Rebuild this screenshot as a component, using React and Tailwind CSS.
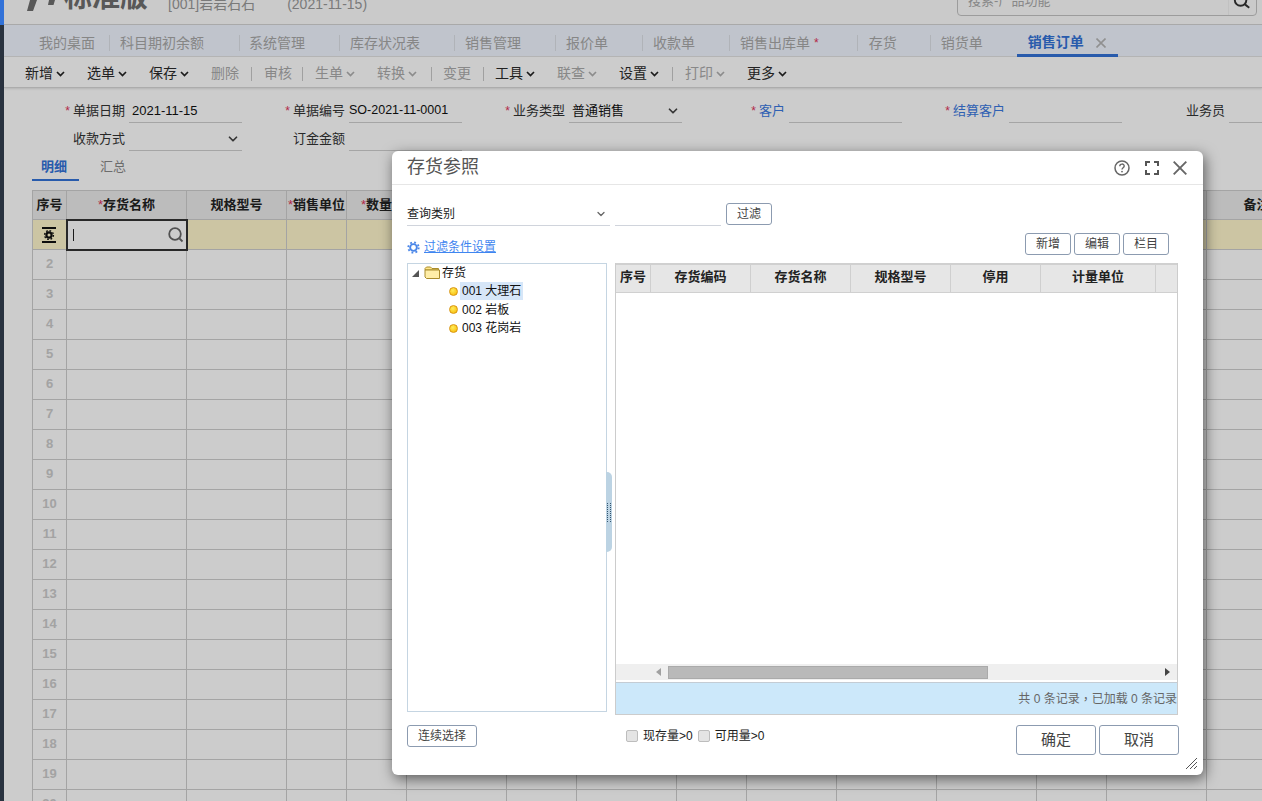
import { ChevronDown } from 'lucide-react';

const font = { fontFamily: '"Liberation Sans","Noto Sans CJK SC",sans-serif' };

const tabs = [
  { name: '我的桌面', cls: 'pl-[11px] pr-[14px]' },
  { name: '科目期初余额', cls: 'pl-[10px] pr-[35px]' },
  { name: '系统管理', cls: 'pl-[9px] pr-[34px]' },
  { name: '库存状况表', cls: 'pl-[10px] pr-[34px]' },
  { name: '销售管理', cls: 'pl-[10px] pr-[34px]' },
  { name: '报价单', cls: 'pl-[10px] pr-[34px]' },
  { name: '收款单', cls: 'pl-[10px] pr-[34px]' },
  { name: '销售出库单', cls: 'pl-[10px] pr-[50px]', star: true },
  { name: '存货', cls: 'pl-[11px] pr-[33px]' },
  { name: '销货单', cls: 'pl-[10px] pr-[34px]' },
];

const gridCols = [34, 120, 100, 60, 60, 100, 70, 100, 70, 90, 100, 100, 70, 100, 100];
const rowNums = Array.from({ length: 19 }, (_, i) => i + 2);

function Chevron({ dim }) {
  return (
    <svg width="9" height="6" viewBox="0 0 9 6" className={dim ? 'ml-[3px] text-[#b0b0b0]' : 'ml-[3px] text-[#222]'}>
      <path d="M1 1l3.5 3.5L8 1" fill="none" stroke="currentColor" strokeWidth="1.7" />
    </svg>
  );
}

function ToolItem({ label, dim, chevron, cls }) {
  return (
    <div className={`flex items-center ${cls} ${dim ? 'text-[#aaaaaa]' : 'text-[#2b2b2b]'}`}>
      <span>{label}</span>
      {chevron && <Chevron dim={dim} />}
    </div>
  );
}

function ToolSep({ cls }) {
  return <div className={`w-px h-[14px] bg-[#c9c9c9] ${cls}`}></div>;
}

function Field({ label, star, blue, value, select, small }) {
  return (
    <div className="flex w-[220px] h-7 shrink-0">
      <div className="w-[103px] pt-1 flex items-center justify-end text-[13px] text-[#333]">
        {star && <span className="text-[#e0325a] mr-[3px] text-[12px]">*</span>}
        <span className={blue ? 'text-[#3a78e0]' : ''}>{label}</span>
      </div>
      <div className={`ml-1 w-[113px] pt-1 border-b border-[#cfcfcf] flex items-center justify-between pr-[2px] text-[#111] ${small ? 'text-[12.5px]' : 'pl-[3px] text-[13px]'}`}>
        <span>{value}</span>
        {select && <ChevronDown size={14} strokeWidth={3} className="text-[#444]" />}
      </div>
    </div>
  );
}

function Btn({ children, cls }) {
  return (
    <button className={`border border-[#8c9bb0] rounded-[3px] bg-white text-[#444] flex items-center justify-center ${cls}`}>
      {children}
    </button>
  );
}

function Folder() {
  return (
    <svg width="17" height="14" viewBox="0 0 17 14">
      <path d="M1 3.5V2.5L2.5 1H6.5L8 2.5H14.5V4H1z" fill="#ffe68a" stroke="#a98c2c" />
      <path d="M1 4H15.5V12.5H2.5L1 11z" fill="#ffeea8" stroke="#a98c2c" />
    </svg>
  );
}

function Ball() {
  return <span className="w-[9px] h-[9px] rounded-full bg-[radial-gradient(circle_at_40%_35%,#ffec5a,#f7b500)] border border-[#d9960f] shrink-0"></span>;
}

function TreeNode({ label, active }) {
  return (
    <div className="flex items-center h-[18.5px] pl-[41px]">
      <Ball />
      <span className={`ml-[2px] px-[2px] h-[18px] leading-[18px] ${active ? 'bg-[#d6e6f8]' : ''}`}>{label}</span>
    </div>
  );
}

export default function App() {
  return (
    <div style={font} className="relative w-[1262px] h-[801px] overflow-hidden bg-white flex">
      {/* left strip */}
      <div className="w-1 shrink-0 flex flex-col bg-[#29323f]">
        <div className="h-[25px] bg-[#3272d8]"></div>
      </div>

      <div className="flex-1 min-w-0 flex flex-col">
        {/* Header, scrolled up */}
        <div className="h-[25px] shrink-0 overflow-hidden border-b border-[#d4d4d4] flex items-start bg-[#fdfdfd]">
          <svg width="30" height="14" viewBox="0 0 30 14" className="ml-[22px] shrink-0">
            <path d="M4 0H11L7 11H1z" fill="#6e6e6e" />
            <path d="M23 0H29L27.5 5H22z" fill="#6e6e6e" />
          </svg>
          <div className="ml-2 -mt-[19px] text-[28px] leading-[34px] font-bold text-[#6e6e6e]">标准版</div>
          <div className="ml-5 -mt-[6px] text-[14px] leading-5 text-[#999]">[001]岩岩石石</div>
          <div className="ml-8 -mt-[6px] text-[14px] leading-5 text-[#999]">(2021-11-15)</div>
          <div className="ml-[590px] -mt-[14px] w-[300px] h-[30px] shrink-0 border border-[#c4c4c4] rounded-[4px] flex items-center justify-between pl-[10px] text-[13px] text-[#aaa]">
            <span>搜索-产品功能</span>
            <svg width="28" height="28" viewBox="0 0 28 28" className="border-l border-[#f2f2f2]">
              <circle cx="12" cy="13" r="6" fill="none" stroke="#333" strokeWidth="2" />
              <path d="M16.5 17.5L21 21" stroke="#333" strokeWidth="2" />
            </svg>
          </div>
        </div>

        {/* Tabs */}
        <div className="h-8 shrink-0 bg-[#f0f5ff] border-b border-[#e4e4e4] flex items-center pl-6 text-[14px] text-[#a8a8a8]">
          {tabs.map((t, i) => (
            <div key={t.name} className={`flex items-center h-[16px] mt-[5px] ${t.cls} ${i > 0 ? 'border-l border-[#dde0e6]' : ''}`}>
              <span>{t.name}</span>
              {t.star && <span className="ml-[4px] -mr-[12px] text-[#e0325a] text-[12px]">*</span>}
            </div>
          ))}
          <div className="flex items-center h-8 w-[101px] pl-[11px] pt-[7px] border-b-[3px] border-[#3272d8] text-[#3272d8] font-bold">
            <span>销售订单</span>
            <svg width="10" height="10" viewBox="0 0 10 10" className="ml-3">
              <path d="M0.5 0.5L9.5 9.5M9.5 0.5L0.5 9.5" stroke="#b5b5b5" strokeWidth="1.6" />
            </svg>
          </div>
        </div>

        {/* Toolbar */}
        <div className="h-[31px] shrink-0 pt-[3px] border-b border-[#d8d8d8] shadow-[0_1px_2px_rgba(0,0,0,0.12)] flex items-center pl-[21px] text-[14px]">
          <ToolItem label="新增" chevron cls="mr-[22px]" />
          <ToolItem label="选单" chevron cls="mr-[22px]" />
          <ToolItem label="保存" chevron cls="mr-[22px]" />
          <ToolItem label="删除" dim cls="mr-3" />
          <ToolSep cls="mr-3" />
          <ToolItem label="审核" dim cls="mr-[10px]" />
          <ToolSep cls="mr-3" />
          <ToolItem label="生单" dim chevron cls="mr-[22px]" />
          <ToolItem label="转换" dim chevron cls="mr-[14px]" />
          <ToolSep cls="mr-[11px]" />
          <ToolItem label="变更" dim cls="mr-3" />
          <ToolSep cls="mr-[11px]" />
          <ToolItem label="工具" chevron cls="mr-[22px]" />
          <ToolItem label="联查" dim chevron cls="mr-[22px]" />
          <ToolItem label="设置" chevron cls="mr-[13px]" />
          <ToolSep cls="mr-3" />
          <ToolItem label="打印" dim chevron cls="mr-[22px]" />
          <ToolItem label="更多" chevron />
        </div>

        {/* Form */}
        <div className="pl-[18px] pt-[7px] shrink-0">
          <div className="flex">
            <Field label="单据日期" star value="2021-11-15" />
            <Field label="单据编号" star value="SO-2021-11-0001" small />
            <Field label="业务类型" star value="普通销售" select />
            <Field label="客户" star blue />
            <Field label="结算客户" star blue />
            <Field label="业务员" />
          </div>
          <div className="flex">
            <Field label="收款方式" select />
            <Field label="订金金额" />
          </div>
        </div>

        {/* Detail tabs */}
        <div className="flex h-[30px] pl-7 shrink-0 text-[13px]">
          <div className="w-[47px] h-[30px] pr-[3px] text-center leading-[32px] border-b-[2px] border-[#3272d8] text-[#3272d8] font-bold">明细</div>
          <div className="ml-[21px] leading-[32px] text-[#888]">汇总</div>
        </div>

        {/* Grid */}
        <div className="pl-7 pt-[9px]">
          <table className="table-fixed border-collapse w-[1274px] text-[13px]">
            <colgroup>
              {gridCols.map((w, i) => <col key={i} style={{ width: w }} />)}
            </colgroup>
            <thead>
              <tr className="h-[29px] bg-[#ebebeb] font-bold text-[#222]">
                <th className="border border-[#cecece]">序号</th>
                <th className="border border-[#cecece]"><span className="text-[#e0325a] font-normal">*</span>存货名称</th>
                <th className="border border-[#cecece]">规格型号</th>
                <th className="border border-[#cecece] whitespace-nowrap"><span className="text-[#e0325a] font-normal">*</span>销售单位</th>
                <th className="border border-[#cecece] whitespace-nowrap"><span className="text-[#e0325a] font-normal">*</span>数量</th>
                {gridCols.slice(5, 14).map((_, i) => <th key={i} className="border border-[#cecece]"></th>)}
                <th className="border border-[#cecece]">备注</th>
              </tr>
            </thead>
            <tbody>
              <tr className="h-[30px] bg-[#fff7cc]">
                <td className="border border-[#cecece]">
                  <svg width="14" height="16" viewBox="0 0 14 16" className="mx-auto">
                    <path d="M0 1H14M0 15H14" stroke="#111" strokeWidth="2" />
                    <circle cx="7" cy="8" r="2.6" fill="none" stroke="#111" strokeWidth="2.2" />
                    <circle cx="7" cy="8" r="4.4" fill="none" stroke="#111" strokeWidth="1.4" strokeDasharray="1.7 1.75" />
                  </svg>
                </td>
                <td className="border-2 border-[#333] bg-white">
                  <div className="flex items-center justify-between pl-[5px] pr-[1px] h-[26px]">
                    <span className="w-px h-[12px] bg-[#222]"></span>
                    <svg width="18" height="18" viewBox="0 0 18 18">
                      <circle cx="8" cy="8" r="5.8" fill="none" stroke="#666" strokeWidth="1.8" />
                      <path d="M12.5 12.5L15.5 15.5" stroke="#666" strokeWidth="1.8" />
                    </svg>
                  </div>
                </td>
                {gridCols.slice(2).map((_, i) => <td key={i} className="border border-[#cecece]"></td>)}
              </tr>
              {rowNums.map((n) => (
                <tr key={n} className="h-[30px]">
                  <td className="border border-[#cecece] pb-[2px] text-center text-[#ccc] font-bold">{n}</td>
                  {gridCols.slice(1).map((_, i) => <td key={i} className="border border-[#cecece]"></td>)}
                </tr>
              ))}
            </tbody>
          </table>
        </div>
      </div>

      {/* Mask */}
      <div className="absolute inset-y-0 right-0 left-1 bg-black/20"></div>

      {/* Dialog */}
      <div className="absolute left-[392px] top-[151px] w-[811px] h-[624px] bg-white rounded-[6px] shadow-[2px_4px_14px_rgba(0,0,0,0.55)] flex flex-col text-[12px] text-[#222]">
        <div className="h-[34px] shrink-0 border-b border-[#e6e6e6] flex items-center justify-between pl-[15px] pr-4">
          <span className="text-[18px] text-[#555]">存货参照</span>
          <div className="flex items-center text-[#555]">
            <svg width="16" height="16" viewBox="0 0 16 16">
              <circle cx="8" cy="8" r="7" fill="none" stroke="#666" strokeWidth="1.5" />
              <path d="M5.8 6.2C5.8 3.4 10.2 3.4 10.2 6c0 1.8-2.2 1.7-2.2 3.6" fill="none" stroke="#666" strokeWidth="1.4" />
              <circle cx="8" cy="11.6" r="0.9" fill="#666" />
            </svg>
            <svg width="14" height="14" viewBox="0 0 14 14" className="ml-[15px]">
              <path d="M1 5V1H5M9 1H13V5M13 9V13H9M5 13H1V9" fill="none" stroke="#555" strokeWidth="2" />
            </svg>
            <svg width="14" height="14" viewBox="0 0 14 14" className="ml-[14px]">
              <path d="M0.7 0.7L13.3 13.3M13.3 0.7L0.7 13.3" stroke="#666" strokeWidth="1.9" />
            </svg>
          </div>
        </div>

        <div className="flex-1 flex flex-col pl-[15px] pr-6 min-h-0">
          {/* Filter */}
          <div className="flex mt-[18px] h-[23px] shrink-0">
            <div className="w-[203px] border-b border-[#d0d4dc] flex items-center justify-between pr-[3px]">
              <span>查询类别</span>
              <ChevronDown size={12} strokeWidth={2.6} className="text-[#666]" />
            </div>
            <div className="ml-[5px] w-[106px] border-b border-[#d0d4dc]"></div>
            <Btn cls="ml-[5px] w-[46px] h-[22px]">过滤</Btn>
          </div>

          {/* Links and actions */}
          <div className="flex items-center justify-between h-[22px] mt-[7px] shrink-0 pr-[10px]">
            <div className="flex items-center pt-[6px]">
              <svg width="13" height="13" viewBox="0 0 14 14" className="mr-[4px]">
                <circle cx="7" cy="7" r="3.6" fill="none" stroke="#4a86e8" strokeWidth="2" />
                <circle cx="7" cy="7" r="5.6" fill="none" stroke="#4a86e8" strokeWidth="2" strokeDasharray="2 2.4" />
              </svg>
              <span className="text-[#3f86f0] underline">过滤条件设置</span>
            </div>
            <div className="flex gap-[3px]">
              <Btn cls="w-[46px] h-[22px]">新增</Btn>
              <Btn cls="w-[46px] h-[22px]">编辑</Btn>
              <Btn cls="w-[46px] h-[22px]">栏目</Btn>
            </div>
          </div>

          {/* Body */}
          <div className="relative flex mt-2 h-[452px] shrink-0">
            <div className="w-[200px] h-[449px] border border-[#c5d5e2] text-[#111]">
              <div className="flex items-center h-[18px] pl-[4px]">
                <svg width="7" height="7" viewBox="0 0 7 7"><path d="M7 0V7H0z" fill="#555" /></svg>
                <span className="ml-[5px]"><Folder /></span>
                <span className="ml-[1px]">存货</span>
              </div>
              <TreeNode label="001 大理石" active />
              <TreeNode label="002 岩板" />
              <TreeNode label="003 花岗岩" />
            </div>

            {/* splitter handle */}
            <div className="absolute left-[199px] top-[209px] w-[6px] h-20 bg-[#bcd3e3] rounded-r-[5px] flex items-center">
              <div className="ml-[1px] grid grid-cols-2 gap-[1px] w-[4px]">
                {Array.from({ length: 20 }, (_, i) => <span key={i} className="w-px h-px bg-[#33556f]"></span>)}
              </div>
            </div>

            <div className="ml-2 w-[563px] border-x border-b border-[#cccccc] flex flex-col">
              <div className="flex h-[30px] shrink-0 bg-[#e6e6e6] border-t-2 border-t-[#d0d0d0] border-b border-b-[#d0d0d0] font-bold text-[13px] text-[#222]">
                <div className="w-[35px] pb-[3px] flex items-center justify-center border-r border-[#cfcfcf]">序号</div>
                <div className="w-[100px] pb-[3px] flex items-center justify-center border-r border-[#cfcfcf]">存货编码</div>
                <div className="w-[100px] pb-[3px] flex items-center justify-center border-r border-[#cfcfcf]">存货名称</div>
                <div className="w-[100px] pb-[3px] flex items-center justify-center border-r border-[#cfcfcf]">规格型号</div>
                <div className="w-[90px] pb-[3px] flex items-center justify-center border-r border-[#cfcfcf]">停用</div>
                <div className="w-[115px] pb-[3px] flex items-center justify-center border-r border-[#cfcfcf]">计量单位</div>
              </div>
              <div className="flex-1"></div>
              {/* scrollbar */}
              <div className="h-[16px] shrink-0 bg-[#efefef] flex items-center">
                <svg width="6" height="8" viewBox="0 0 6 8" className="ml-[40px]"><path d="M5 0V8L0 4z" fill="#a0a0a0" /></svg>
                <div className="ml-[6px] w-[320px] h-[13px] bg-[#b9b9b9] border border-[#aaa]"></div>
                <svg width="6" height="8" viewBox="0 0 6 8" className="ml-[177px]"><path d="M0 0V8L5 4z" fill="#444" /></svg>
              </div>
              <div className="h-[2px] shrink-0"></div>
              <div className="h-[32px] shrink-0 bg-[#cce8fa] border-t border-[#c4ccd4] flex items-center justify-end text-[#666]">
                共 0 条记录<span className="font-['Noto_Sans_CJK_TC']">，</span>已加载 0 条记录
              </div>
            </div>
          </div>

          {/* Bottom */}
          <div className="flex mt-[10px] justify-between items-start shrink-0">
            <div className="flex items-start">
              <Btn cls="w-[70px] h-[22px]">连续选择</Btn>
              <div className="ml-[149px] mt-[2px] flex items-center text-[#222]">
                <span className="w-3 h-3 rounded-[2px] bg-[#e4e4e4] border border-[#bdbdbd]"></span>
                <span className="ml-[5px]">现存量&gt;0</span>
                <span className="ml-[5px] w-3 h-3 rounded-[2px] bg-[#e4e4e4] border border-[#bdbdbd]"></span>
                <span className="ml-[5px]">可用量&gt;0</span>
              </div>
            </div>
            <div className="flex gap-[3px]">
              <Btn cls="w-20 h-[30px] text-[15px]">确定</Btn>
              <Btn cls="w-20 h-[30px] text-[15px]">取消</Btn>
            </div>
          </div>
        </div>

        {/* resize grip */}
        <svg width="12" height="12" viewBox="0 0 12 12" className="absolute right-[6px] bottom-[6px]">
          <path d="M1 12L12 1M5 12L12 5M9 12L12 9" stroke="#555" strokeWidth="1" />
        </svg>
      </div>
    </div>
  );
}
